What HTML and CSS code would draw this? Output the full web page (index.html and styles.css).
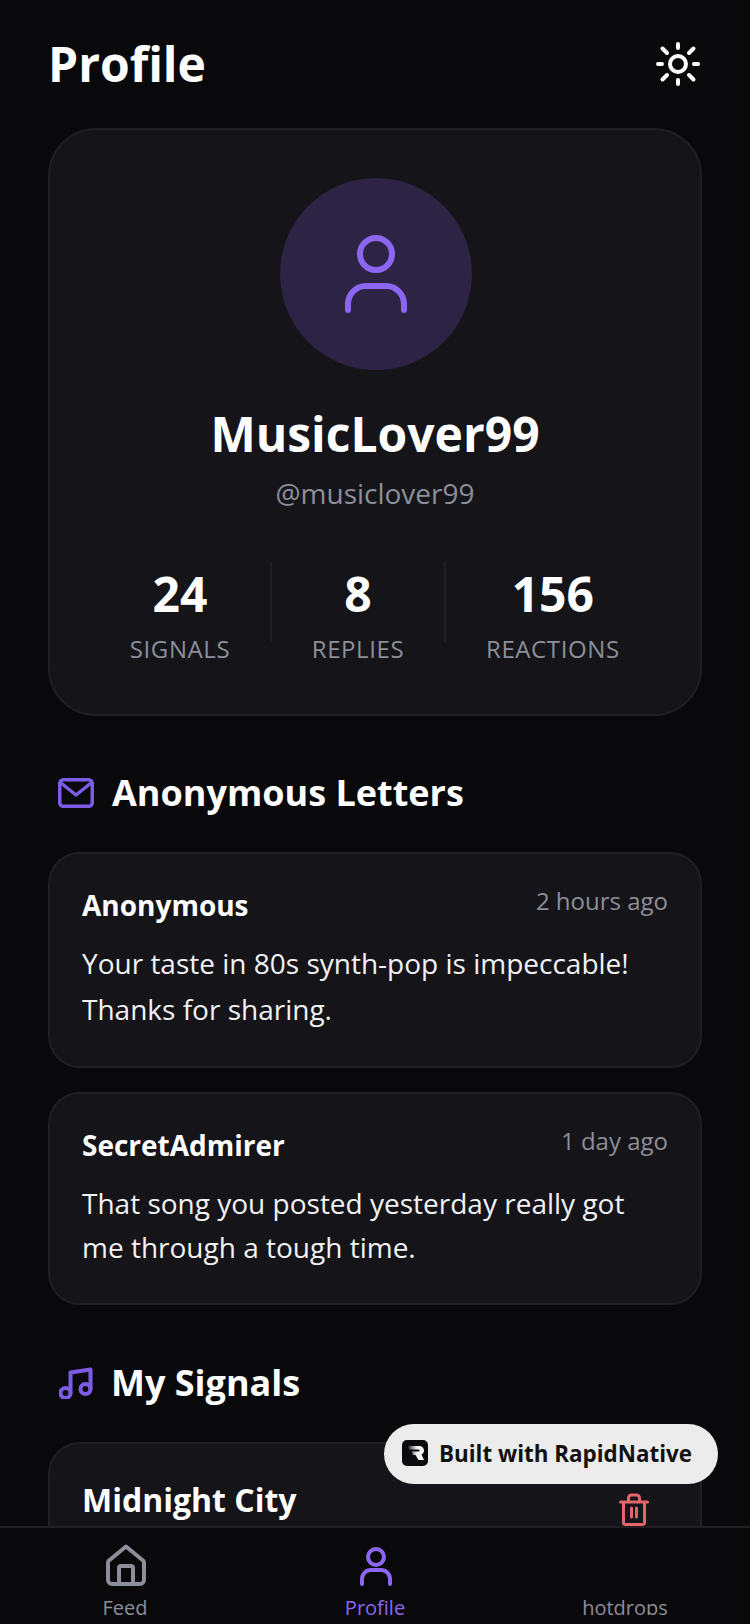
FILE: index.html
```html
<!DOCTYPE html>
<html lang="en">
<head>
<meta charset="utf-8">
<title>Profile</title>
<link rel="stylesheet" href="styles.css">
</head>
<body>
<div class="app">
  <main class="scroll">
    <header class="top">
      <h1 class="title">Profile</h1>
      <svg class="sun" viewBox="0 0 48 48" fill="none" stroke="#fff" stroke-width="4" stroke-linecap="round"><circle cx="24" cy="24" r="8"/><path d="M24 4v4M24 40v4M4 24h4M40 24h4M8.500 8.500l4.500 4.500M35 35l4.500 4.500M8.500 39.500L13 35M35 13l4.500-4.500"/></svg>
    </header>
    <section class="card profile">
      <div class="avatar">
        <svg class="avatar-icon" viewBox="0 0 62 78" fill="none" stroke="#8b66f0" stroke-width="6" stroke-linecap="round"><circle cx="31" cy="19" r="16"/><path d="M3 75v-6a18 18 0 0 1 18-18h20a18 18 0 0 1 18 18v6"/></svg>
      </div>
      <div class="name">MusicLover99</div>
      <div class="handle">@musiclover99</div>
      <div class="stats">
        <div class="stat s1"><div class="num">24</div><div class="lab">SIGNALS</div></div>
        <div class="stat s2"><div class="num">8</div><div class="lab">REPLIES</div></div>
        <div class="stat s3"><div class="num">156</div><div class="lab">REACTIONS</div></div>
      </div>
    </section>
    <h2 class="section letters-h">
      <svg class="mail" viewBox="0 0 36 30" fill="none" stroke="#7c5ce6" stroke-width="3.500" stroke-linecap="round" stroke-linejoin="round"><rect x="1.750" y="1.750" width="32.500" height="26.500" rx="3.500"/><path d="M3 5l15 12L33 5"/></svg>
      <span>Anonymous Letters</span>
    </h2>
    <article class="card letter first">
      <div class="letter-top"><span class="from">Anonymous</span><span class="time">2 hours ago</span></div>
      <p class="body">Your taste in 80s synth-pop is impeccable! Thanks for sharing.</p>
    </article>
    <article class="card letter second">
      <div class="letter-top"><span class="from">SecretAdmirer</span><span class="time">1 day ago</span></div>
      <p class="body">That song you posted yesterday really got me through a tough time.</p>
    </article>
    <h2 class="section signals-h">
      <svg class="music" viewBox="0 0 34 32" fill="none" stroke="#7c5ce6" stroke-width="4" stroke-linecap="round" stroke-linejoin="round"><circle cx="6.500" cy="26" r="5"/><circle cx="26.500" cy="22" r="5"/><path d="M11.500 26V5.500L31.500 2.500V22"/></svg>
      <span>My Signals</span>
    </h2>
    <article class="card signal">
      <div class="signal-title">Midnight City</div>
      <svg class="trash" viewBox="0 0 30 33" fill="none" stroke="#e8646c" stroke-width="3" stroke-linecap="round" stroke-linejoin="round"><path d="M1.500 9h27M4.500 9v20.500a2 2 0 0 0 2 2h17a2 2 0 0 0 2-2V9M9.500 9V5a3 3 0 0 1 3-3h5a3 3 0 0 1 3 3v4M12.500 15v9M17.500 15v9"/></svg>
    </article>
  </main>
  <nav class="tabs">
    <div class="tab">
      <svg class="home" viewBox="0 0 40 42" fill="none" stroke="#8c8f99" stroke-width="4" stroke-linejoin="round"><path d="M20 2.500L3 16.500a3 3 0 0 0-1 2.300V36a4 4 0 0 0 4 4h28a4 4 0 0 0 4-4V18.800a3 3 0 0 0-1-2.300z"/><path d="M13 40V24a2 2 0 0 1 2-2h10a2 2 0 0 1 2 2v16"/></svg>
      <span class="tab-label">Feed</span>
    </div>
    <div class="tab">
      <svg class="person" viewBox="0 0 32 39" fill="none" stroke="#8b66f0" stroke-width="4" stroke-linecap="round"><circle cx="16" cy="10" r="8"/><path d="M2 37v-5a9 9 0 0 1 9-9h10a9 9 0 0 1 9 9v5"/></svg>
      <span class="tab-label active">Profile</span>
    </div>
    <div class="tab">
      <div class="blank"></div>
      <span class="tab-label">hotdrops</span>
    </div>
  </nav>
  <div class="badge">
    <svg class="badge-logo" viewBox="0 0 26 26"><defs><linearGradient id="rg" x1="0" x2="1" y1="0" y2="0"><stop offset="0" stop-color="#2a2a2c"/><stop offset="0.55" stop-color="#f4f4f4"/></linearGradient></defs><rect width="26" height="26" rx="5" fill="#0b0b0d"/><path d="M6 6h11.500a4.500 4.500 0 0 1 2 8.500L22 20h-5.500l-3-5H11l-1-3.500h6.500a1 1 0 0 0 0-2H7.500z" fill="url(#rg)"/></svg>
    <span>Built with RapidNative</span>
  </div>
</div>
</body>
</html>
```

FILE: styles.css
```css
* { box-sizing: border-box; }
html, body { margin: 0; padding: 0; background: #09090b; }
body { font-family: "Open Sans", "Noto Sans", sans-serif; color: #fff; }
.app { position: relative; width: 750px; height: 1624px; display: flex; flex-direction: column; overflow: hidden; }
.scroll { flex: 1 1 auto; height: 0; overflow: hidden; padding: 24px 48px 0; }

.top { display: flex; justify-content: space-between; align-items: center; height: 80px; margin-bottom: 24px; }
.title { margin: 0; font-size: 48px; line-height: 80px; font-weight: 700; }
.sun { width: 48px; height: 48px; }

.card { background: #141419; border: 2px solid #1f1f24; }
.profile { height: 588px; border-radius: 48px; padding-top: 48px; display: flex; flex-direction: column; align-items: center; }
.avatar { width: 192px; height: 192px; margin-left: 2px; border-radius: 50%; background: #2d2445; display: flex; align-items: center; justify-content: center; }
.avatar-icon { width: 62px; height: 78px; }
.name { margin-top: 31px; font-size: 48px; line-height: 66px; font-weight: 700; }
.handle { margin-top: 6px; font-size: 28px; line-height: 40px; color: #8c8f99; }
.stats { margin-top: 49px; display: flex; align-self: stretch; padding-left: 40px; }
.stat { display: flex; flex-direction: column; align-items: center; height: 80px; }
.s1 { flex: 0 0 182px; border-right: 2px solid #1f1f24; }
.s2 { flex: 0 0 174px; border-right: 2px solid #1f1f24; }
.s3 { flex: 0 0 auto; padding-left: 40px; }
.num { margin-top: -1px; font-size: 48px; line-height: 66px; font-weight: 700; white-space: nowrap; }
.lab { margin-top: 4px; font-size: 24px; line-height: 36px; color: #8c8f99; letter-spacing: 0.6px; white-space: nowrap; }

.section { display: flex; align-items: center; margin: 0; font-size: 36px; line-height: 50px; font-weight: 700; }
.letters-h { margin-top: 52px; margin-bottom: 34px; padding-left: 10px; gap: 18px; }
.signals-h { margin-top: 53px; margin-bottom: 34px; padding-left: 11px; gap: 18px; }
.mail { width: 36px; height: 30px; flex: none; }
.music { width: 34px; height: 32px; flex: none; }

.letter { border-radius: 32px; padding: 29px 32px 0; }
.first { height: 216px; }
.second { margin-top: 24px; height: 213px; }
.letter-top { display: flex; justify-content: space-between; align-items: flex-start; }
.from { font-size: 28px; line-height: 44px; font-weight: 700; }
.time { margin-top: 1px; font-size: 24px; line-height: 34px; color: #8c8f99; }
.body { margin: 0; font-size: 28px; color: #f2f2f4; }
.first .body { margin-top: 13px; line-height: 46px; }
.second .body { margin-top: 14px; line-height: 44px; }

.signal { position: relative; height: 200px; border-radius: 32px; padding: 34px 32px; }
.signal-title { font-size: 32px; line-height: 44px; font-weight: 700; }
.trash { position: absolute; right: 51px; top: 49px; width: 30px; height: 33px; }

.tabs { flex: none; height: 98px; border-top: 2px solid #1f1f24; background: #09090b; display: flex; overflow: hidden; }
.tab { flex: 1 1 0; height: 87px; overflow: hidden; display: flex; flex-direction: column; align-items: center; }
.home { width: 40px; height: 42px; margin: 16px 0 2px 2px; flex: none; }
.person { width: 32px; height: 39px; margin: 19px 0 2px 2px; flex: none; }
.blank { height: 44px; margin-top: 16px; flex: none; }
.tab-label { margin-top: 6px; font-size: 20px; line-height: 28px; color: #8c8f99; }
.tab-label.active { color: #8b66f0; font-weight: 500; }

.badge { position: absolute; left: 384px; top: 1424px; width: 334px; height: 60px; padding: 0 0 2px 18px; border-radius: 30px; background: #ececec; color: #111; display: flex; align-items: center; gap: 11px; font-size: 22.400px; font-weight: 700; white-space: nowrap; }
.badge-logo { width: 26px; height: 26px; flex: none; }
```
